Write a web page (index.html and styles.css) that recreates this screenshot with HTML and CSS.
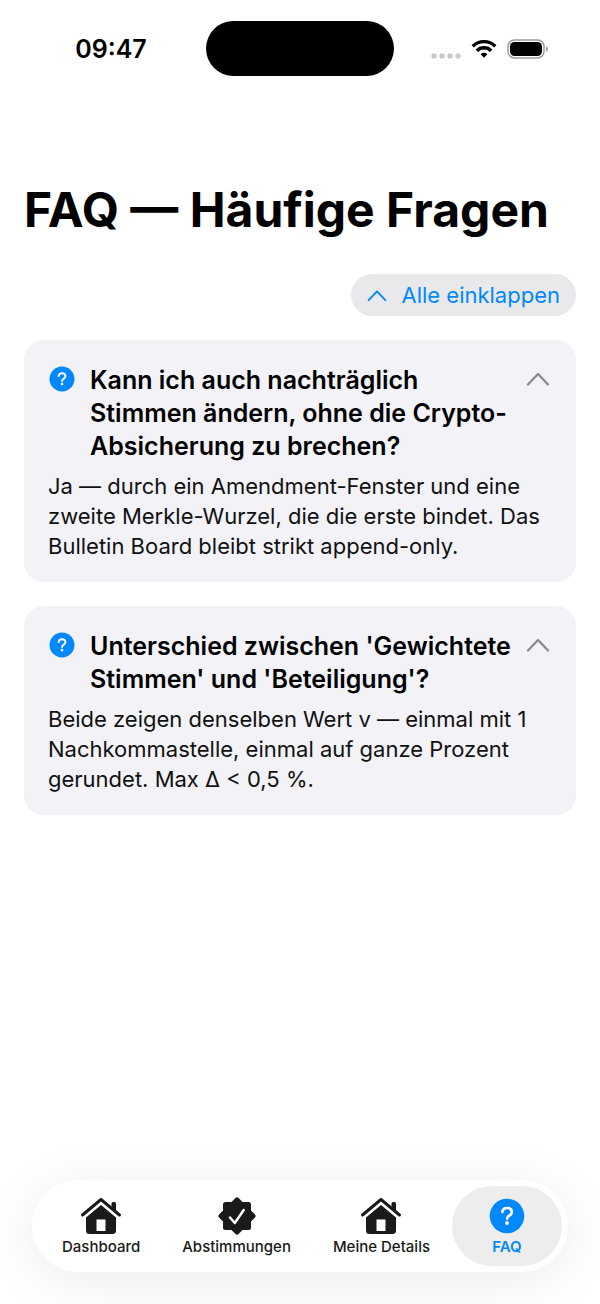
FILE: index.html
```html
<!DOCTYPE html>
<html lang="de">
  <head>
    <meta charset="UTF-8" />
    <meta name="viewport" content="width=device-width, initial-scale=1.0" />
    <title>FAQ — Häufige Fragen</title>
    <link rel="stylesheet" href="styles.css">
  </head>
  <body>
    <svg class="sprite" aria-hidden="true">
      <symbol id="chevron" viewBox="0 0 24 14">
        <path d="M2 12.5 12 2l10 10.5" fill="none" stroke="currentColor" stroke-width="2.3" stroke-linecap="round" stroke-linejoin="round" />
      </symbol>
      <symbol id="question" viewBox="0 0 36 36">
        <circle cx="18" cy="18" r="17.3" fill="currentColor" />
        <path d="M13.3 14c.3-2.600 2.100-4 4.800-4 2.800 0 4.700 1.500 4.700 3.900 0 1.700-.9 2.700-2.400 3.600-1.600 1-2.300 1.700-2.300 3.300" fill="none" stroke="#fff" stroke-width="2.700" stroke-linecap="round" stroke-linejoin="round" />
        <circle cx="18" cy="25" r="1.900" fill="#fff" />
      </symbol>
      <symbol id="house" viewBox="0 0 42 38">
        <path d="M31.500 10.500V6.500q0-1.500 1.500-1.500h1.500q1.500 0 1.500 1.500V15z" fill="currentColor" />
        <path d="M2.500 18 21 2.500 39.500 18" fill="none" stroke="currentColor" stroke-width="3" stroke-linecap="round" stroke-linejoin="round" />
        <path fill-rule="evenodd" d="M21 8 36 20.500V33.500q0 3.500-3.500 3.500h-23Q6 37 6 33.500V20.500zM16.500 22.500V34h9V22.500z" fill="currentColor" />
      </symbol>
    </svg>

    <div class="screen">
      <div class="statusbar">
        <span class="time">09:47</span>
        <div class="island"></div>
        <div class="indicators">
          <svg width="30" height="6" viewBox="0 0 30 6" fill="#cbcbcb">
            <circle cx="3" cy="3" r="2.700" />
            <circle cx="11" cy="3" r="2.700" />
            <circle cx="19" cy="3" r="2.700" />
            <circle cx="27" cy="3" r="2.700" />
          </svg>
          <svg width="26" height="20" viewBox="0 0 26 20" fill="none" stroke="#000" stroke-width="3.400">
            <path d="M1.700 7.300a16 16 0 0 1 22.600 0" />
            <path d="M5.900 11.700a10 10 0 0 1 14.200 0" />
            <path d="M13 18.700 9.600 15.200a4.800 4.800 0 0 1 6.800 0z" fill="#000" stroke="none" />
          </svg>
          <svg width="42" height="20" viewBox="0 0 42 20">
            <rect x="1" y="1" width="36" height="18" rx="6.500" fill="none" stroke="#9a9a9a" stroke-width="1.500" />
            <rect x="3" y="3" width="32" height="14" rx="4.500" fill="#000" />
            <path d="M39 7.200q2 .8 2 2.800t-2 2.800z" fill="#9a9a9a" />
          </svg>
        </div>
      </div>

      <main class="content">
        <h1>FAQ — Häufige Fragen</h1>

        <button type="button" class="toggleAll">
          <svg class="smallChevron"><use href="#chevron" /></svg>
          <span class="toggleText">Alle einklappen</span>
        </button>

        <section class="card">
          <button type="button" class="question" aria-expanded="true" aria-controls="answer1">
            <svg class="questionIcon"><use href="#question" /></svg>
            <span class="questionText">Kann ich auch nachträglich Stimmen ändern, ohne die Crypto-Absicherung zu brechen?</span>
            <svg class="chevron"><use href="#chevron" /></svg>
          </button>
          <p class="answer" id="answer1">Ja — durch ein Amendment-Fenster und eine zweite Merkle-Wurzel, die die erste bindet. Das Bulletin Board bleibt strikt append-only.</p>
        </section>

        <section class="card">
          <button type="button" class="question" aria-expanded="true" aria-controls="answer2">
            <svg class="questionIcon"><use href="#question" /></svg>
            <span class="questionText">Unterschied zwischen 'Gewichtete Stimmen' und 'Beteiligung'?</span>
            <svg class="chevron"><use href="#chevron" /></svg>
          </button>
          <p class="answer" id="answer2">Beide zeigen denselben Wert v — einmal mit 1 Nachkommastelle, einmal auf ganze Prozent gerundet. Max Δ &lt; 0,5 %.</p>
        </section>
      </main>

      <nav class="tabbar">
        <a class="tab" href="#dashboard">
          <svg class="houseIcon"><use href="#house" /></svg>
          <span>Dashboard</span>
        </a>
        <a class="tab" href="#abstimmungen">
          <svg class="sealIcon" viewBox="0 0 38 38">
            <path d="M19 3l4.500 4.500H30.500V14.500L35 19l-4.500 4.500V30.500H23.500L19 35l-4.500-4.500H7.500V23.500L3 19l4.500-4.500V7.500H14.500z" fill="currentColor" stroke="currentColor" stroke-width="5" stroke-linejoin="round" />
            <path d="M12 20.500 16.800 26 25.700 13" fill="none" stroke="#fff" stroke-width="2.500" stroke-linecap="round" stroke-linejoin="round" />
          </svg>
          <span>Abstimmungen</span>
        </a>
        <a class="tab" href="#details">
          <svg class="houseIcon"><use href="#house" /></svg>
          <span>Meine Details</span>
        </a>
        <a class="tab active" href="#faq" aria-current="page">
          <svg class="faqIcon"><use href="#question" /></svg>
          <span>FAQ</span>
        </a>
      </nav>
    </div>

    <script>
      var questions = document.querySelectorAll(".question");
      var toggleAll = document.querySelector(".toggleAll");
      var toggleText = document.querySelector(".toggleText");

      function setOpen(question, open) {
        question.setAttribute("aria-expanded", open);
        question.nextElementSibling.hidden = !open;
      }

      function anyOpen() {
        return document.querySelector('.question[aria-expanded="true"]') !== null;
      }

      function updateToggleAll() {
        toggleText.textContent = anyOpen() ? "Alle einklappen" : "Alle ausklappen";
        toggleAll.classList.toggle("closed", !anyOpen());
      }

      questions.forEach((question) => {
        question.addEventListener("click", () => {
          setOpen(question, question.getAttribute("aria-expanded") !== "true");
          updateToggleAll();
        });
      });

      toggleAll.addEventListener("click", () => {
        var open = !anyOpen();
        questions.forEach((question) => setOpen(question, open));
        updateToggleAll();
      });
    </script>
  </body>
</html>
```
FILE: styles.css
```css
* {
  box-sizing: border-box;
}

body {
  margin: 0;
  background-color: #fff;
  color: #000;
  font-family: Inter, "Liberation Sans", sans-serif;
}

button {
  border: none;
  font-family: inherit;
  color: inherit;
  cursor: pointer;
}

.sprite {
  display: none;
}

.screen {
  display: flex;
  flex-direction: column;
  min-height: 100vh;
}

.statusbar {
  display: grid;
  grid-template-columns: 1fr auto 1fr;
  align-items: center;
  padding-top: 21px;
}

.time {
  padding-left: 16px;
  text-align: center;
  font-size: 25px;
  font-weight: 600;
}

.island {
  width: 188px;
  height: 55px;
  border-radius: 28px;
  background-color: #000;
}

.indicators {
  display: flex;
  align-items: center;
  justify-content: center;
  gap: 10px;
  padding-right: 14px;
}

.indicators svg:first-child {
  margin-top: 14px;
}

.content {
  display: flex;
  flex-direction: column;
  padding: 104px 24px 24px;
}

h1 {
  margin: 0;
  font-size: 48px;
  line-height: 60px;
  font-weight: 700;
}

.toggleAll {
  display: flex;
  align-items: center;
  align-self: flex-end;
  gap: 14px;
  height: 42px;
  margin: 34px 0 24px;
  padding: 0 16px;
  border-radius: 21px;
  background-color: #e9e9eb;
  color: #0088ff;
  font-size: 22px;
}

.smallChevron {
  width: 20px;
  height: 13px;
}

.closed .smallChevron,
.question[aria-expanded="false"] .chevron {
  transform: rotate(180deg);
}

.card {
  margin-bottom: 24px;
  padding: 24px 24px 21px;
  border-radius: 20px;
  background-color: #f2f2f7;
}

.question {
  display: flex;
  align-items: flex-start;
  width: 100%;
  padding: 0;
  background: none;
  text-align: left;
  font-size: 25px;
  line-height: 33px;
  font-weight: 600;
}

.questionIcon {
  flex: none;
  width: 28px;
  height: 26px;
  margin-top: 2px;
  color: #0088ff;
}

.questionText {
  flex: 1;
  padding: 0 12px 0 14px;
}

.chevron {
  flex: none;
  width: 28px;
  height: 14px;
  margin-top: 8px;
  color: #8a8a8e;
}

.answer {
  margin: 8px 0 0;
  font-size: 22px;
  line-height: 30px;
  color: #111;
}

.tabbar {
  display: flex;
  justify-content: space-between;
  margin: auto 32px 32px;
  padding: 6px 6px 6px 10px;
  border-radius: 46px;
  background-color: #fff;
  box-shadow: 0 8px 56px rgba(0, 0, 0, 0.08);
}

.tab {
  display: flex;
  flex-direction: column;
  align-items: center;
  min-width: 110px;
  height: 80px;
  padding: 11px 20px 0;
  border-radius: 40px;
  color: #1a1a1a;
  font-size: 15px;
  line-height: 18px;
  font-weight: 500;
  text-decoration: none;
  white-space: nowrap;
}

.tab svg {
  height: 38px;
  margin-bottom: 3px;
}

.houseIcon {
  width: 42px;
}

.sealIcon {
  width: 40px;
}

.faqIcon {
  width: 36px;
}

.active {
  background-color: #ededed;
  color: #0088ff;
  font-weight: 600;
}
```
